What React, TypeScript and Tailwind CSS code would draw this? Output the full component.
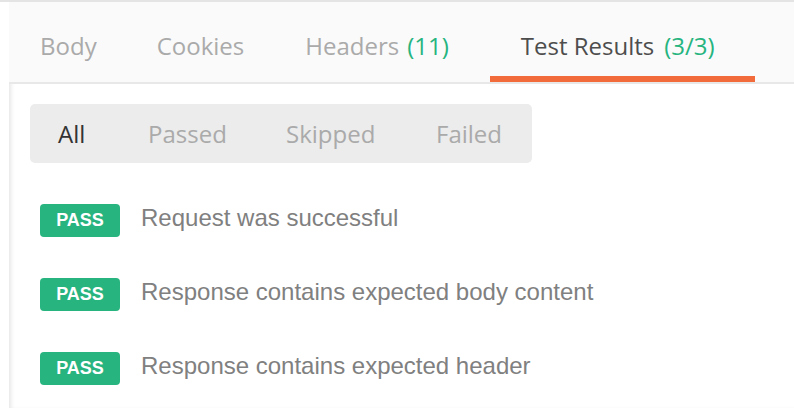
import React from "react";

const tabs = [
  { label: "Body" },
  { label: "Cookies" },
  { label: "Headers", count: "(11)" },
];

const filters = [
  { label: "All", width: "w-[90px]" },
  { label: "Passed", width: "w-[138px]" },
  { label: "Skipped", width: "w-[150px]" },
  { label: "Failed", width: "w-auto" },
];

const results = [
  "Request was successful",
  "Response contains expected body content",
  "Response contains expected header",
];

export default function App() {
  return (
    <div className="w-[794px] h-[408px] bg-white overflow-hidden border-t-2 border-[#e4e4e4]">
      <div className="ml-[9px] h-full shadow-[inset_4px_0_4px_-2px_rgba(0,0,0,0.1)] flex flex-col">
        {/* Tabs */}
        <div
          className="flex h-[82px] shrink-0 bg-[#fafafa] border-b-2 border-[#e8e8e8] pl-[31px]"
          style={{ fontFamily: '"Open Sans", sans-serif' }}
        >
          {tabs.map((tab, i) => (
            <div
              key={tab.label}
              className={`pt-[28px] text-[24px] leading-[32px] text-[#aaaaaa] ${
                i === 0 ? "mr-[60px]" : i === 1 ? "mr-[61px]" : "mr-[41px]"
              }`}
            >
              {tab.label}
              {tab.count && (
                <span className="ml-[8px] text-[#26b47f]">{tab.count}</span>
              )}
            </div>
          ))}
          <div className="pt-[28px] pl-[31px] pr-[40px] border-b-[6px] border-[#f26b3a] text-[24px] leading-[32px] text-[#4d4d4d]">
            Test Results
            <span className="ml-[10px] text-[#26b47f]">(3/3)</span>
          </div>
        </div>

        {/* Filters */}
        <div
          className="mt-[20px] ml-[21px] w-[502px] h-[59px] shrink-0 rounded-[5px] bg-[#ececec] flex items-center pl-[28px] text-[24px] leading-[32px]"
          style={{ fontFamily: '"Open Sans", sans-serif' }}
        >
          {filters.map((f, i) => (
            <span
              key={f.label}
              className={`${f.width} ${i === 0 ? "text-[#333333]" : "text-[#aaaaaa]"}`}
            >
              {f.label}
            </span>
          ))}
        </div>

        {/* Results */}
        <div
          className="mt-[41px] pl-[31px] flex flex-col gap-[41px]"
          style={{ fontFamily: '"Liberation Sans", Arial, sans-serif' }}
        >
          {results.map((r) => (
            <div key={r} className="flex items-start gap-[21px]">
              <span className="w-[80px] h-[33px] rounded-[4px] bg-[#27b47f] text-white font-bold text-[18px] flex items-center justify-center">
                PASS
              </span>
              <span className="text-[24px] leading-[28px] text-[#808080]">{r}</span>
            </div>
          ))}
        </div>
      </div>
    </div>
  );
}
